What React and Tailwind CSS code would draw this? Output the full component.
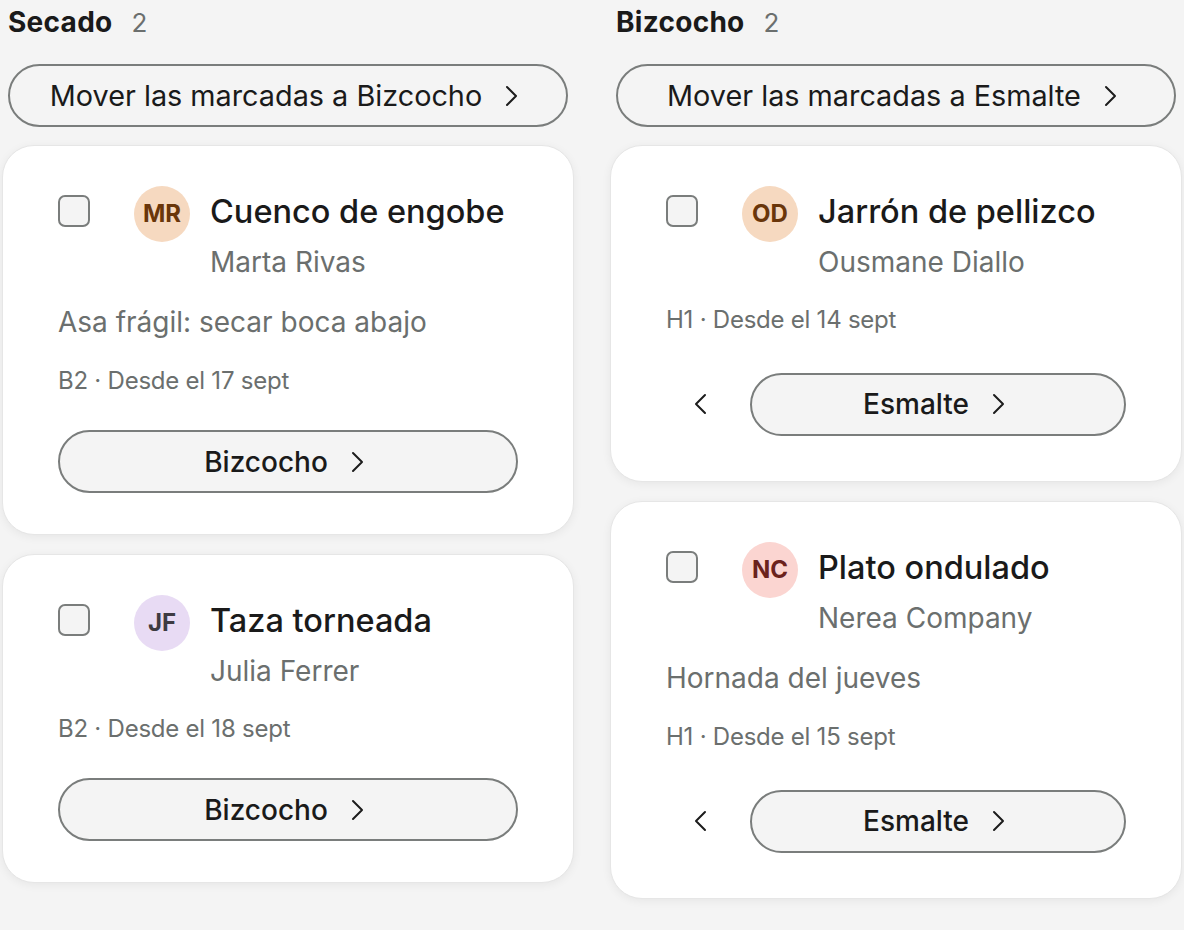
import React from 'react'

const columns = [
  {
    title: 'Secado',
    next: 'Bizcocho',
    items: [
      {
        initials: 'MR',
        tone: 'bg-[#f6d9c0] text-[#6a360a]',
        name: 'Cuenco de engobe',
        maker: 'Marta Rivas',
        note: 'Asa frágil: secar boca abajo',
        meta: 'B2 · Desde el 17 sept',
      },
      {
        initials: 'JF',
        tone: 'bg-[#e8dbf4] text-[#3e3b42]',
        name: 'Taza torneada',
        maker: 'Julia Ferrer',
        meta: 'B2 · Desde el 18 sept',
      },
    ],
  },
  {
    title: 'Bizcocho',
    next: 'Esmalte',
    back: true,
    items: [
      {
        initials: 'OD',
        tone: 'bg-[#f6d9c0] text-[#6a360a]',
        name: 'Jarrón de pellizco',
        maker: 'Ousmane Diallo',
        meta: 'H1 · Desde el 14 sept',
      },
      {
        initials: 'NC',
        tone: 'bg-[#fbd5d1] text-[#6b221c]',
        name: 'Plato ondulado',
        maker: 'Nerea Company',
        note: 'Hornada del jueves',
        meta: 'H1 · Desde el 15 sept',
      },
    ],
  },
]

function Chevron({ left = false }) {
  return (
    <svg width="28" height="28" viewBox="0 0 28 28" fill="none" stroke="#1c1c1c" strokeWidth="2" strokeLinecap="round" strokeLinejoin="round">
      {left ? <path d="M19 5l-9 9 9 9" /> : <path d="M9 5l9 9-9 9" />}
    </svg>
  )
}

function Card({ item, next, back }) {
  return (
    <div className="-mx-[6px] rounded-[32px] border border-[#e6e6e6] bg-white px-[55px] pt-[40px] pb-[41px] shadow-[0_2px_10px_rgba(0,0,0,0.06)]">
      <div className="flex items-start">
        <div className="mt-[9px] h-[32px] w-[32px] shrink-0 rounded-[7px] border-2 border-[#7a7d7c] bg-[#f4f4f4]" />
        <div className={`ml-[44px] flex h-[56px] w-[56px] shrink-0 items-center justify-center rounded-full text-[24px] font-bold ${item.tone}`}>
          {item.initials}
        </div>
        <div className="ml-[20px] min-w-0">
          <div className="mt-[6px] text-[32.5px] leading-[40px] font-medium text-[#1a1a1a]">{item.name}</div>
          <div className="mt-[12px] text-[28px] leading-[36px] text-[#6b6f6e]">{item.maker}</div>
        </div>
      </div>
      {item.note && (
        <div className="mt-[24px] text-[28px] leading-[36px] text-[#6b6f6e]">{item.note}</div>
      )}
      <div className={`${item.note ? 'mt-[25px]' : 'mt-[24px]'} text-[24px] leading-[32px] tracking-[-0.01em] text-[#6b6f6e]`}>{item.meta}</div>
      {back ? (
        <div className="mt-[32px] flex h-[72px] items-center gap-4">
          <button className="flex h-[68px] w-[68px] shrink-0 items-center justify-center">
            <Chevron left />
          </button>
          <button className="flex h-[63px] flex-1 items-center justify-center gap-4 rounded-full border-2 border-[#7a7d7c] bg-[#f4f4f4] text-[28px] font-medium text-[#1a1a1a]">
            <span>{next}</span>
            <Chevron />
          </button>
        </div>
      ) : (
        <button className="mt-[33px] flex h-[63px] w-full items-center justify-center gap-4 rounded-full border-2 border-[#7a7d7c] bg-[#f4f4f4] text-[28px] font-medium text-[#1a1a1a]">
          <span>{next}</span>
          <Chevron />
        </button>
      )}
    </div>
  )
}

export default function App() {
  return (
    <div
      className="min-h-[930px] overflow-hidden bg-[#f4f4f4] px-[8px] pt-[6px]"
      style={{ fontFamily: 'Inter, "Noto Sans", sans-serif' }}
    >
      <div className="flex gap-[48px]">
        {columns.map((col) => (
          <div key={col.title} className="w-[560px] shrink-0">
            <div className="flex items-baseline gap-[19px] text-[28px] leading-[32px]">
              <span className="font-bold tracking-[0.01em] text-[#1a1a1a]">{col.title}</span>
              <span className="text-[26px] text-[#6b6f6e]">{col.items.length}</span>
            </div>
            <button className="mt-[25px] flex h-[63px] w-full items-center justify-center gap-4 rounded-full border-2 border-[#7a7d7c] bg-[#f4f4f4] text-[28.8px] text-[#1a1a1a]">
              <span>Mover las marcadas a {col.next}</span>
              <Chevron />
            </button>
            <div className="mt-[18px] flex flex-col gap-[19px]">
              {col.items.map((item) => (
                <Card key={item.name} item={item} next={col.next} back={col.back} />
              ))}
            </div>
          </div>
        ))}
      </div>
    </div>
  )
}
